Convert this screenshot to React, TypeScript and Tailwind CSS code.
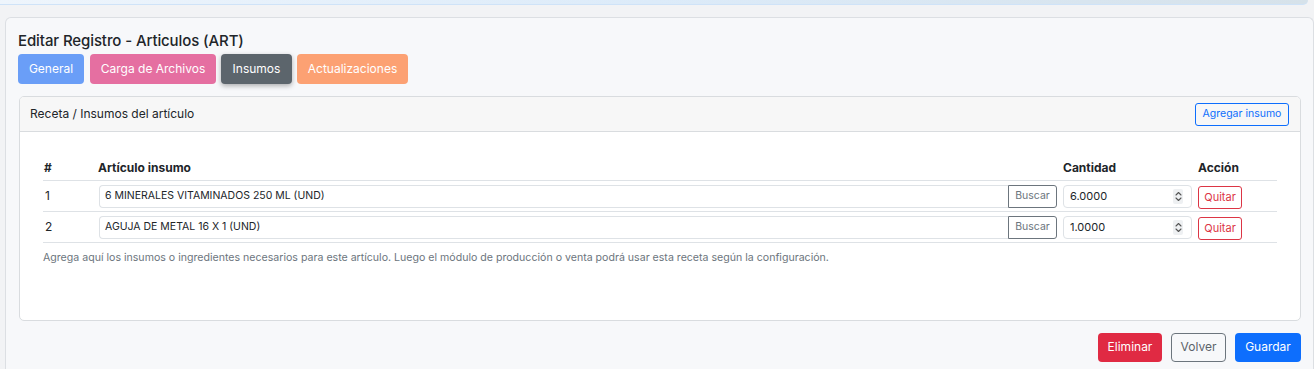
import { useState } from "react";

interface Insumo {
  id: number;
  nombre: string;
  cantidad: string;
}

const TABS = [
  { label: "General", className: "bg-[#6a9ef7] w-[66px] mr-[1px]" },
  { label: "Carga de Archivos", className: "bg-[#e56fa1] w-[126px]" },
  { label: "Insumos", className: "bg-[#5c656c] w-[71px] shadow-[0_2px_5px_rgba(0,0,0,0.3)]" },
  { label: "Actualizaciones", className: "bg-[#fca173] w-[111px]" },
];

const COLS = "grid-cols-[54px_1fr_136px_82px]";

function Spinner() {
  return (
    <span className="flex h-[15px] w-[10px] items-center justify-center rounded-[2px] bg-[#eef0f2]">
      <svg width="7" height="11" viewBox="0 0 7 11" fill="none">
        <path d="M1 4L3.5 1.5L6 4" stroke="#555" strokeWidth="1.1" strokeLinecap="round" strokeLinejoin="round" />
        <path d="M1 7L3.5 9.5L6 7" stroke="#555" strokeWidth="1.1" strokeLinecap="round" strokeLinejoin="round" />
      </svg>
    </span>
  );
}

export default function App() {
  const [insumos] = useState<Insumo[]>([
    { id: 1, nombre: "6 MINERALES VITAMINADOS 250 ML (UND)", cantidad: "6.0000" },
    { id: 2, nombre: "AGUJA DE METAL 16 X 1 (UND)", cantidad: "1.0000" },
  ]);

  return (
    <div
      className="min-h-[369px] w-[1314px] overflow-hidden bg-[#f2f3f5] text-[#212529]"
      style={{ fontFamily: "Inter, 'Noto Sans', sans-serif" }}
    >
      {/* barra superior */}
      <div className="mr-[6px] h-[5px] rounded-br-[8px] border-b border-[#cfe3f8] bg-gradient-to-r from-[#eef5fc] via-[#dcebf9] to-[#d6e2ea]" />

      <div className="ml-[5px] mt-[12px] rounded-t-[6px] border border-b-0 border-[#dcdfe3] bg-[#f7f8fa] pb-[7px] pl-[12px] pr-[12px] pt-[12px]">
        <h1 className="text-[15px] font-medium leading-[22px] tracking-[-0.1px]">
          Editar Registro - Articulos (ART)
        </h1>

        <div className="mt-[2px] flex gap-[5px]">
          {TABS.map((t) => (
            <button
              key={t.label}
              type="button"
              className={`h-[30px] rounded-[4px] text-[12px] text-white ${t.className}`}
            >
              {t.label}
            </button>
          ))}
        </div>

        <div className="ml-[1px] mt-[12px] overflow-hidden rounded-[5px] border border-[#d9dcdf] bg-white">
          <div className="flex h-[35px] items-center justify-between border-b border-[#d9dcdf] bg-[#f7f7f7] pl-[10px] pr-[11px]">
            <span className="text-[12px]">Receta / Insumos del artículo</span>
            <button
              type="button"
              className="h-[23px] w-[94px] rounded-[3px] border border-[#0d6efd] text-[10.5px] text-[#0d6efd]"
            >
              Agregar insumo
            </button>
          </div>

          <div className="px-[23px] pb-[54px] pt-[24px]">
            <div className={`grid h-[25px] items-center border-b border-[#dee2e6] text-[12px] font-bold ${COLS}`}>
              <div className="pl-[1px]">#</div>
              <div className="pl-[1px]">Artículo insumo</div>
              <div className="pl-[4px]">Cantidad</div>
              <div className="pl-[3px]">Acción</div>
            </div>
            {insumos.map((row) => (
              <div
                key={row.id}
                className={`grid h-[31px] items-center border-b border-[#dee2e6] ${COLS}`}
              >
                <div className="pl-[2px] text-[12px]">{row.id}</div>
                <div className="flex h-[23px] pl-[2px] pr-[2px]">
                  <div className="flex flex-1 items-center rounded-l-[4px] border border-r-0 border-[#dee2e6] pl-[5px] text-[10.5px]">
                    {row.nombre}
                  </div>
                  <button
                    type="button"
                    className="w-[49px] rounded-r-[3px] border border-[#6c757d] text-[10.5px] text-[#6c757d]"
                  >
                    Buscar
                  </button>
                </div>
                <div className="pl-[4px]">
                  <div className="flex h-[23px] w-[129px] items-center justify-between rounded-[4px] border border-[#dee2e6] pl-[6px] pr-[8px] text-[11px]">
                    <span>{row.cantidad}</span>
                    <Spinner />
                  </div>
                </div>
                <div className="pl-[3px]">
                  <button
                    type="button"
                    className="h-[23px] w-[44px] rounded-[3px] border border-[#dc3545] text-[11px] text-[#dc3545]"
                  >
                    Quitar
                  </button>
                </div>
              </div>
            ))}
            <p className="mt-[7px] text-[10.6px] leading-[15.75px] text-[#6c757d]">
              Agrega aquí los insumos o ingredientes necesarios para este artículo. Luego el módulo de producción o venta podrá usar esta receta según la configuración.
            </p>
          </div>
        </div>

        <div className="mt-[12px] flex justify-end gap-[9px]">
          <button type="button" className="h-[29px] w-[64px] rounded-[4px] bg-[#e02a43] text-[12px] text-white">
            Eliminar
          </button>
          <button
            type="button"
            className="h-[29px] w-[55px] rounded-[4px] border border-[#6c757d] text-[12px] text-[#5c636a]"
          >
            Volver
          </button>
          <button type="button" className="h-[29px] w-[66px] rounded-[4px] bg-[#0d6efd] text-[12px] text-white">
            Guardar
          </button>
        </div>
      </div>
    </div>
  );
}
